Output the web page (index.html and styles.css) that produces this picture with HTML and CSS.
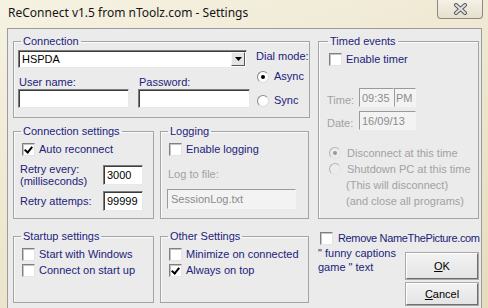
FILE: index.html
```html
<!DOCTYPE html>
<html lang="en">
<head>
    <meta charset="UTF-8">
    <title>ReConnect v1.5 from nToolz.com - Settings</title>
    <link rel="stylesheet" href="styles.css">
</head>
<body>
    <div class="window">
        <div class="titlebar">
            <span class="title">ReConnect v1.5 from nToolz.com - Settings</span>
            <div class="close">
                <svg width="15" height="12" viewBox="0 0 15 12">
                    <path d="M3 2 L12 10 M12 2 L3 10" stroke="#5a5a5a" stroke-width="4" stroke-linecap="round"/>
                    <path d="M3 2 L12 10 M12 2 L3 10" stroke="#e2e2e2" stroke-width="2" stroke-linecap="round"/>
                </svg>
            </div>
        </div>

        <div class="client">
            <div class="col-left">
                <fieldset class="group conn">
                    <legend>Connection</legend>
                    <div class="conn-body">
                        <div class="conn-fields">
                            <div class="combo">
                                <span>HSPDA</span>
                                <span class="combo-btn">
                                    <svg width="7" height="4" viewBox="0 0 7 4"><path d="M0 0 H7 L3.5 4 Z" fill="#000"/></svg>
                                </span>
                            </div>
                            <div class="cred">
                                <div class="field">
                                    <span class="field-label">User name:</span>
                                    <span class="input"></span>
                                </div>
                                <div class="field">
                                    <span class="field-label">Password:</span>
                                    <span class="input"></span>
                                </div>
                            </div>
                        </div>
                        <div class="dial">
                            <div class="dial-label">Dial mode:</div>
                            <div class="option async"><span class="radio on"></span>Async</div>
                            <div class="option sync"><span class="radio"></span>Sync</div>
                        </div>
                    </div>
                </fieldset>

                <div class="row mid">
                    <fieldset class="group settings">
                        <legend>Connection settings</legend>
                        <div class="option first"><span class="check on"></span>Auto reconnect</div>
                        <div class="retry">
                            <span class="retry-label">Retry every:<br>(milliseconds)</span>
                            <span class="input small">3000</span>
                        </div>
                        <div class="retry attempts">
                            <span class="retry-label">Retry attemps:</span>
                            <span class="input small">99999</span>
                        </div>
                    </fieldset>
                    <fieldset class="group logging">
                        <legend>Logging</legend>
                        <div class="option first"><span class="check"></span>Enable logging</div>
                        <div class="muted log-label">Log to file:</div>
                        <span class="input disabled log-file">SessionLog.txt</span>
                    </fieldset>
                </div>

                <div class="row bottom">
                    <fieldset class="group startup">
                        <legend>Startup settings</legend>
                        <div class="option first"><span class="check"></span>Start with Windows</div>
                        <div class="option"><span class="check"></span>Connect on start up</div>
                    </fieldset>
                    <fieldset class="group other">
                        <legend>Other Settings</legend>
                        <div class="option first"><span class="check"></span>Minimize on connected</div>
                        <div class="option"><span class="check on"></span>Always on top</div>
                    </fieldset>
                </div>
            </div>

            <div class="col-right">
                <fieldset class="group timed">
                    <legend>Timed events</legend>
                    <div class="option first"><span class="check"></span>Enable timer</div>
                    <div class="when time">
                        <span class="muted when-label">Time:</span>
                        <span class="input disabled hour">09:35</span>
                        <span class="input disabled ampm">PM</span>
                    </div>
                    <div class="when">
                        <span class="muted when-label">Date:</span>
                        <span class="input disabled date">16/09/13</span>
                    </div>
                    <div class="muted timed-opts">
                        <div class="option"><span class="radio dim on"></span>Disconnect at this time</div>
                        <div class="option"><span class="radio dim"></span>Shutdown PC at this time</div>
                        <div class="note-line">(This will disconnect)</div>
                        <div class="note-line">(and close all programs)</div>
                    </div>
                </fieldset>

                <div class="option remove"><span class="check"></span>Remove NameThePicture.com</div>
                <div class="foot">
                    <div class="foot-note">" funny captions<br>game " text</div>
                    <div class="buttons">
                        <div class="btn"><u>O</u>K</div>
                        <div class="btn"><u>C</u>ancel</div>
                    </div>
                </div>
            </div>
        </div>
    </div>
</body>
</html>
```

FILE: styles.css
```css
* {
    margin: 0;
    padding: 0;
    box-sizing: border-box;
}

body {
    width: 488px;
    height: 308px;
    overflow: hidden;
    font-family: 'Liberation Sans', Arial, sans-serif;
    font-size: 11px;
    color: #22227a;
    background: linear-gradient(160deg, #f6f2e2 0%, #ece5cc 60%, #e6dcc0 100%);
}

.window {
    height: 308px;
    display: flex;
    flex-direction: column;
    padding: 0 6px 0 7px;
}

.titlebar {
    height: 28px;
    display: flex;
    justify-content: space-between;
    align-items: flex-start;
}

.title {
    font-family: 'Noto Sans', sans-serif;
    font-size: 12px;
    color: #151515;
    padding: 4px 0 0 1px;
}

.close {
    width: 46px;
    height: 19px;
    margin-right: -1px;
    border: 1px solid #8c8a80;
    border-top: none;
    border-radius: 0 0 4px 4px;
    background: linear-gradient(#f4f1e6, #e6e0cc);
    display: flex;
    align-items: center;
    justify-content: center;
}

.client {
    flex: 1;
    background: #ebebeb;
    border: 1px solid #9c9c9c;
    border-bottom: none;
    display: flex;
    gap: 9px;
    padding: 6px 0 0 5px;
}

.col-left {
    width: 296px;
}

.col-right {
    width: 161px;
}

/* group boxes */
.group {
    border: 1px solid #a4a4a4;
    box-shadow: inset 1px 1px 0 #fafafa;
    padding: 0 0 0 7px;
}

.group legend {
    line-height: 13px;
    padding: 0 2px;
    color: #22227a;
}

.row {
    display: flex;
    gap: 6px;
}

.row.mid {
    margin-top: 7px;
}

.row.bottom {
    margin-top: 11px;
}

/* connection */
.conn {
    height: 83px;
    padding-left: 4px;
}

.conn legend {
    margin-left: 3px;
}

.conn-body {
    display: flex;
}

.conn-fields {
    width: 232px;
    flex-shrink: 0;
    padding-top: 2px;
}

.combo {
    width: 229px;
    height: 18px;
    background: #fff;
    border: 1px solid;
    border-color: #7c7c7c #e8e8e8 #e8e8e8 #7c7c7c;
    box-shadow: inset 1px 1px 0 #3c3c3c;
    display: flex;
    align-items: center;
    justify-content: space-between;
    padding: 0 1px 0 3px;
    color: #000;
}

.combo-btn {
    width: 14px;
    height: 14px;
    background: #e4e4e4;
    border: 1px solid;
    border-color: #f8f8f8 #555 #555 #f8f8f8;
    display: flex;
    align-items: center;
    justify-content: center;
}

.cred {
    display: flex;
    gap: 9px;
    margin-top: 8px;
}

.field {
    display: flex;
    flex-direction: column;
}

.field-label {
    line-height: 13px;
    padding-left: 1px;
}

.input {
    display: flex;
    align-items: center;
    flex-shrink: 0;
    width: 111px;
    height: 19px;
    background: #fff;
    border: 1px solid;
    border-color: #7c7c7c #e8e8e8 #e8e8e8 #7c7c7c;
    box-shadow: inset 1px 1px 0 #3c3c3c;
    padding-left: 3px;
    color: #000;
}

.field + .field .input {
    width: 112px;
}

.input.small {
    width: 40px;
    height: 20px;
}

.input.disabled {
    background: #f3f3f3;
    color: #8c8c8c;
    box-shadow: none;
    border-color: #9a9a9a #f4f4f4 #f4f4f4 #9a9a9a;
}

.dial {
    margin-left: 6px;
    padding-top: 2px;
    white-space: nowrap;
}

.dial-label {
    line-height: 13px;
}

.option {
    display: flex;
    align-items: center;
    height: 13px;
    line-height: 13px;
    white-space: nowrap;
}

.dial .option {
    padding-left: 1px;
}

.option.async {
    margin-top: 7px;
}

.option.sync {
    margin-top: 11px;
}

.radio {
    flex-shrink: 0;
    width: 12px;
    height: 12px;
    border-radius: 50%;
    background: #fff;
    border: 1px solid #8a8a8a;
    border-right-color: #dcdcdc;
    border-bottom-color: #dcdcdc;
    margin-right: 5px;
    display: flex;
    align-items: center;
    justify-content: center;
}

.radio.on::after {
    content: '';
    width: 4px;
    height: 4px;
    border-radius: 50%;
    background: #000;
}

.radio.dim {
    background: #ececec;
    border-color: #b4b4b4 #e4e4e4 #e4e4e4 #b4b4b4;
}

.radio.dim.on::after {
    background: #9a9a9a;
}

.check {
    flex-shrink: 0;
    width: 13px;
    height: 13px;
    margin: 0 4px 0 1px;
    background: #fff;
    border: 1px solid;
    border-color: #808080 #e4e4e4 #e4e4e4 #808080;
    box-shadow: inset 1px 1px 0 #c4c4c4;
    display: flex;
    align-items: center;
    justify-content: center;
}

.check.on::after {
    content: '';
    width: 3px;
    height: 6px;
    margin-top: -2px;
    border: solid #000;
    border-width: 0 2px 2px 0;
    transform: rotate(40deg);
}

.muted {
    color: #a2a2a2;
}

.option.first {
    margin-top: 5px;
}

/* connection settings */
.settings {
    width: 141px;
    height: 94px;
    padding-right: 10px;
}

.retry {
    display: flex;
    justify-content: space-between;
    align-items: center;
    margin: 7px 0 0 -1px;
}

.retry-label {
    line-height: 12px;
}

.retry.attempts {
    margin-top: 4px;
}

.logging {
    width: 149px;
    height: 94px;
}

.log-label {
    line-height: 13px;
    margin-top: 12px;
}

.log-file {
    width: 129px;
    height: 20px;
    margin: 8px 0 0 -1px;
}

.startup {
    width: 141px;
    height: 73px;
}

.other {
    width: 149px;
    height: 73px;
}

.startup .option + .option,
.other .option + .option {
    margin-top: 3px;
}

/* timed events */
.timed {
    height: 184px;
    padding-left: 9px;
}

.when {
    display: flex;
    align-items: center;
    margin-top: 4px;
}

.when.time {
    margin-top: 22px;
}

.when-label {
    width: 32px;
    margin-left: -1px;
    padding-top: 4px;
}

.input.hour {
    width: 35px;
    padding-left: 2px;
}

.input.ampm {
    width: 22px;
    padding-left: 1px;
}

.input.date {
    width: 57px;
    padding-left: 2px;
}

.timed-opts {
    margin-top: 15px;
}

.timed-opts .option {
    padding-left: 1px;
    height: 16px;
}

.timed-opts .radio {
    margin-right: 6px;
}

.note-line {
    padding-left: 18px;
    line-height: 16px;
}

.option.remove {
    margin-top: 13px;
    padding-left: 1px;
    letter-spacing: -0.35px;
}

.remove .check {
    margin-right: 5px;
}

.foot {
    display: flex;
    justify-content: space-between;
}

.foot-note {
    line-height: 14px;
    margin-top: 1px;
}

.buttons {
    display: flex;
    flex-direction: column;
    gap: 4px;
    margin-top: 8px;
    margin-right: 1px;
}

.btn {
    width: 72px;
    height: 26px;
    background: linear-gradient(#f2f2f2, #e4e4e4);
    border: 1px solid;
    border-color: #ffffff #6e6e6e #6e6e6e #ffffff;
    box-shadow: 0 0 0 1px #a8a8a8;
    display: flex;
    align-items: center;
    justify-content: center;
    color: #000;
}

.btn + .btn {
    height: 22px;
}
```
